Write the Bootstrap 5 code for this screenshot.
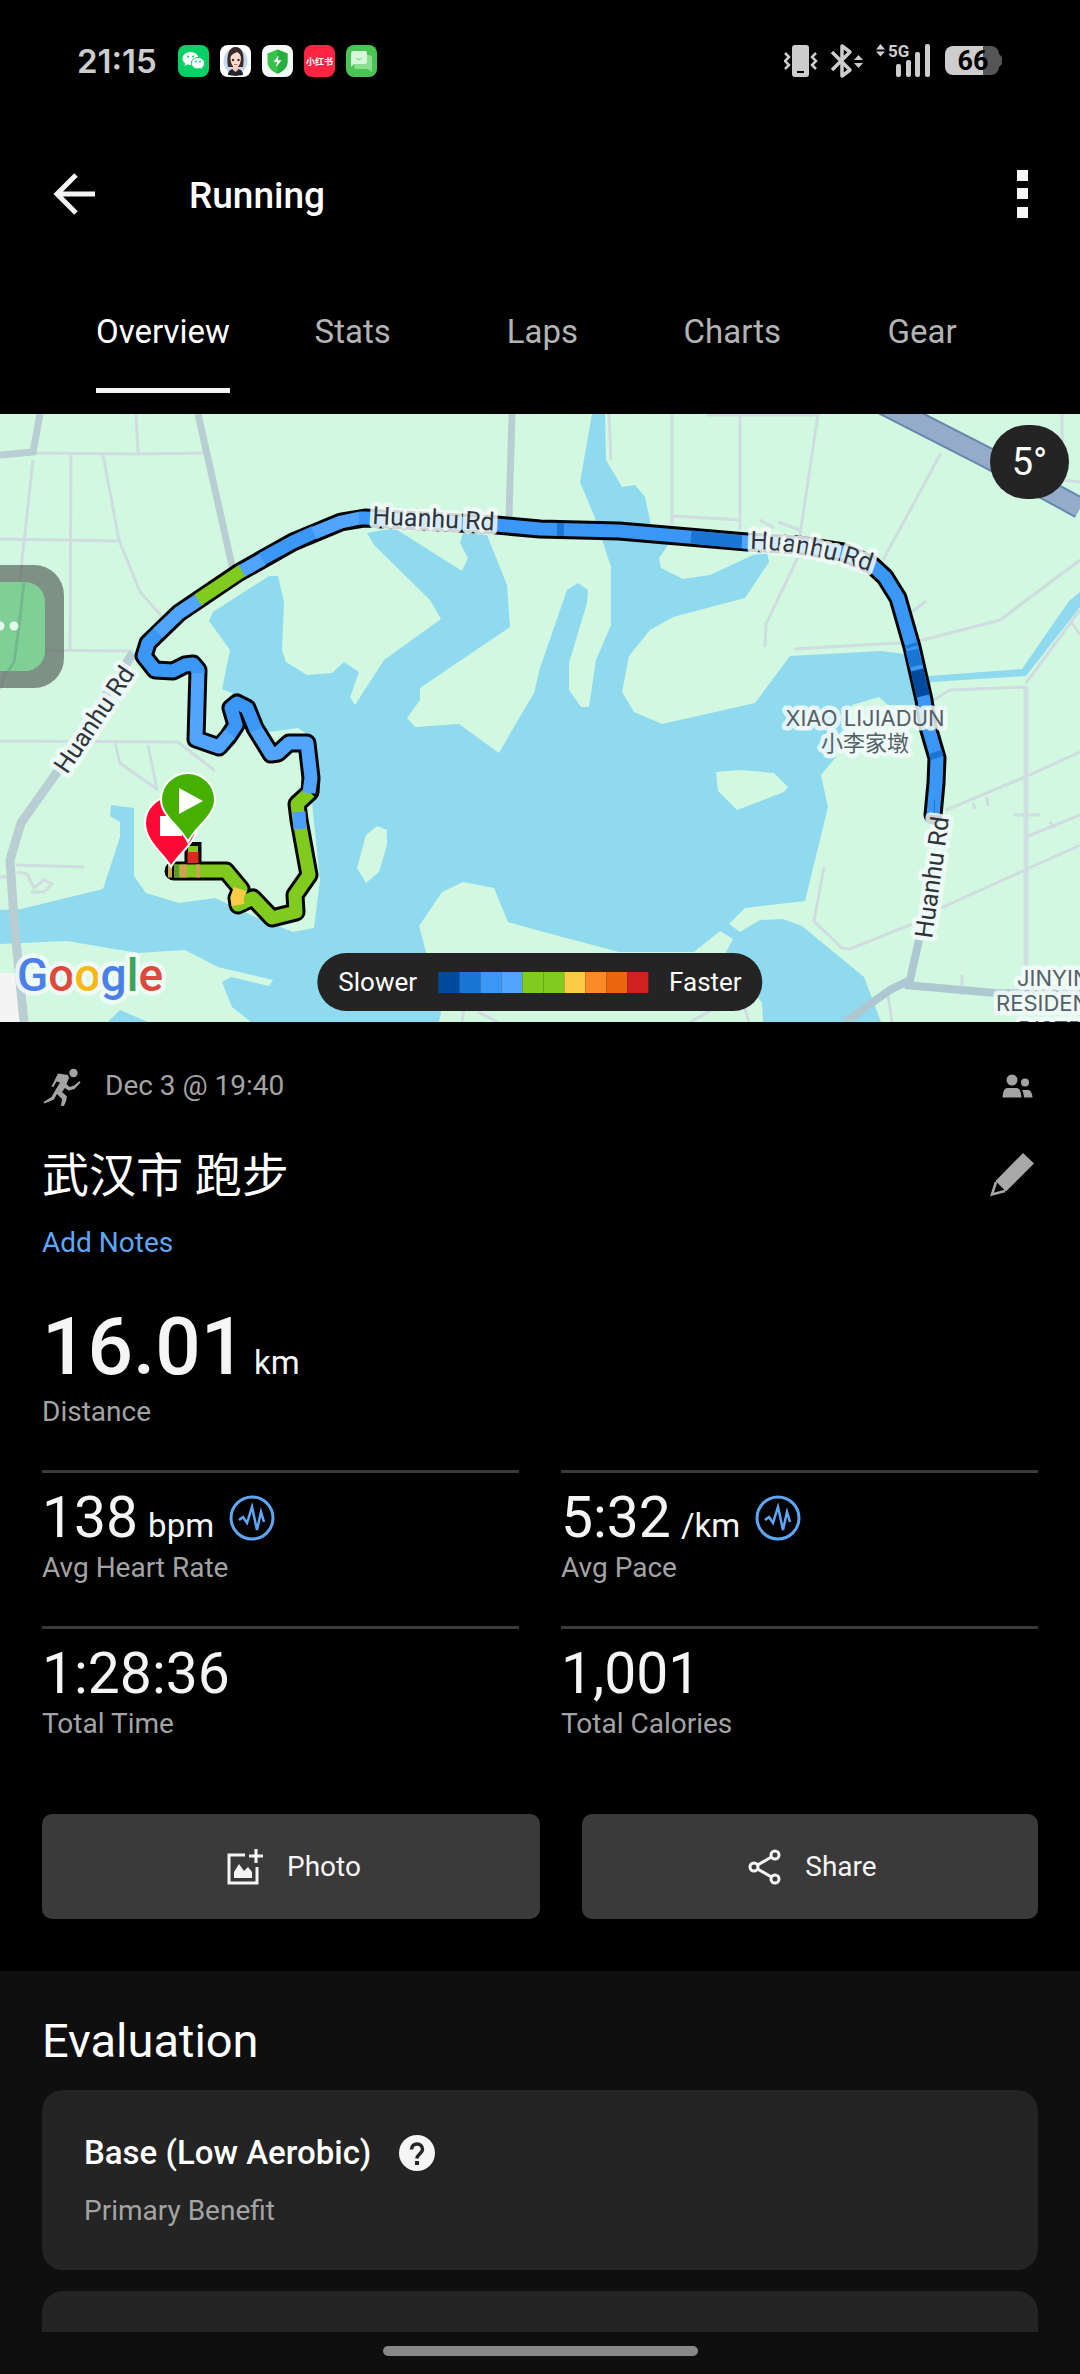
<!DOCTYPE html>
<html lang="en" data-bs-theme="dark">
<head>
<meta charset="utf-8">
<meta name="viewport" content="width=device-width, initial-scale=1">
<title>Running</title>
<link href="https://cdn.jsdelivr.net/npm/bootstrap@5.3.0/dist/css/bootstrap.min.css" rel="stylesheet">
<style>
  :root { --edge: 42px; --fg: #f5f5f5; --dim: #a3a3a3; }
  body { background: #000; color: var(--fg); font-family: Roboto, "Noto Sans CJK SC", sans-serif; font-size: 28px; line-height: 40px; }
  svg { display: block; flex: none; }
  .status-bar { height: 122px; padding: 0 77px; color: #cdcdcd; }
  .status-time { font-family: Inter, Roboto, sans-serif; font-size: 33px; font-weight: 600; margin-right: 21px; }
  .app-icons { gap: 11px; }
  .app-bar { height: 142px; padding: 2px 50px 0; }
  .app-title { font-size: 37px; line-height: 40px; font-weight: 500; margin: 3px 0 0 91px; }
  .icon-btn { background: none; border: 0; padding: 0; color: inherit; }
  .tab-row { padding: 0 63px 21px 68px; }
  .tab-row a { display: inline-block; font-size: 33px; color: #b3b3b3; text-decoration: none; padding: 48px 0 36px; border-bottom: 5px solid transparent; }
  .tab-row a.active { color: #fff; border-color: var(--fg); }
  .map-box svg.map { width: 100%; height: auto; }
  .map-pill { background: #242424; color: #fff; }
  .temp-chip { position: absolute; top: 11px; right: 11px; width: 79px; height: 74px; border-radius: 37px; font-size: 38px; }
  .pace-key { position: absolute; left: 50%; bottom: 11px; transform: translateX(-50%); height: 58px; padding: 0 21px; gap: 21px; border-radius: 29px; font-size: 26px; }
  .pace-key i { display: block; width: 21px; height: 21px; }
  .edge-x { padding-left: var(--edge); padding-right: var(--edge); }
  .dim { color: var(--dim); }
  .act-head { padding-top: 44px; }
  .act-title { font-size: 47px; line-height: 60px; font-weight: 400; margin: 0; }
  .act-date { padding-left: 21px; }
  .title-row { margin-top: 40px; }
  .notes-link { display: inline-block; margin-top: 17px; color: #5ea7f7; text-decoration: none; }
  .big-value { font-size: 80px; line-height: 90px; font-weight: 500; }
  .big-stat { margin: 39px 0 38px; }
  .unit { font-size: 33px; line-height: 40px; font-weight: 400; margin-left: 10px; }
  .big-value .unit { margin-left: 8px; }
  .stat-grid { display: grid; grid-template-columns: 1fr 1fr; column-gap: 42px; }
  .stat-cell { border-top: 3px solid #3a3a3a; padding: 15px 0 38px; }
  .stat-value { font-size: 57px; line-height: 60px; }
  .stat-value .pulse { margin: 7px 0 0 15px; }
  .actions { padding: 32px 0 52px; }
  .act-btn { height: 105px; border-radius: 10px; background: #3a3a3a; color: var(--fg); font-size: 28px; gap: 23px; padding-left: 17px; }
  .act-btn:hover { background: #444; color: #fff; }
  .eval { background: #0f0f0f; padding-top: 40px; }
  .eval h2 { font-size: 47px; line-height: 60px; font-weight: 400; margin: 0 0 19px; }
  .panel { background: #242424; border: 0; border-radius: 21px; padding: 43px 42px 39px; }
  .panel h3 { font-size: 33px; line-height: 40px; font-weight: 500; margin: 0 28px 0 0; }
  .panel p { margin: 18px 0 0; }
  .panel-next { margin-top: 21px; height: 41px; padding: 0; border-radius: 21px 21px 0 0; }
  .home-bar { background: #0f0f0f; padding: 14px 0 18px; }
  .home-bar div { width: 315px; height: 10px; border-radius: 5px; background: #888; }
  .map text { font-family: Roboto, "Noto Sans CJK SC", sans-serif; paint-order: stroke; stroke: #f3fbfa; stroke-opacity: .85; stroke-width: 9px; stroke-linejoin: round; }
  .rd-name { font-size: 25px; fill: #30343a; }
  .map .place text { font-family: Inter, "Noto Sans CJK SC", sans-serif; font-size: 22px; fill: #566067; }
  .map .brand { font-size: 46px; font-weight: 500; }
</style>
</head>
<body>
<header>
  <div class="status-bar d-flex align-items-center justify-content-between">
    <div class="d-flex align-items-center">
      <span class="status-time">21:15</span>
      <div class="app-icons d-flex">
        <svg width="31" height="32" viewBox="0 0 31 32" aria-label="WeChat"><rect width="31" height="32" rx="8" fill="#07d065"/><path d="M12.500 7C8 7 4.500 9.900 4.500 13.500c0 2 1.100 3.800 2.800 5L6.600 21l2.900-1.400c1 .3 2 .4 3 .4 4.500 0 8-2.900 8-6.500S17 7 12.500 7z" fill="#fff"/><path d="M20 12.500c3.800 0 6.600 2.600 6.600 5.700 0 1.700-.9 3.200-2.200 4.300l.5 2.200-2.500-1.200c-.8.2-1.600.4-2.400.4-3.800 0-6.600-2.600-6.600-5.700s2.800-5.700 6.600-5.700z" fill="#fff" stroke="#07d065"/><g fill="#07d065"><circle cx="10" cy="11.500" r="1"/><circle cx="15" cy="11.500" r="1"/><circle cx="18" cy="16.500" r=".9"/><circle cx="22" cy="16.500" r=".9"/></g></svg>
        <svg width="31" height="32" viewBox="0 0 31 32" aria-label="Contact"><rect width="31" height="32" rx="8" fill="#fff"/><ellipse cx="15.500" cy="16" rx="12" ry="13" fill="#c5d8ef"/><path d="M8 22C6 10 9 2 15.500 2S25 9 23 22z" fill="#3a2b2b"/><path d="M8 30c0-5 3-6 7.500-6s7.500 1 7.500 6l-7.500 1z" fill="#25242c"/><path d="M13 20h5v5l-2.500 2-2.500-2z" fill="#f3c9b8"/><path d="M10.500 14C10 9 16 8 17 7c2 1 4.500 3 3.800 8-.6 5-3 7.500-5.200 7.500s-4.700-3-5.100-8.500z" fill="#fbddd0"/><g fill="#402a2a"><circle cx="13" cy="15" r="1.200"/><circle cx="18.500" cy="15" r="1.200"/></g><path d="M14 19.500h3.500" stroke="#d86a6a"/></svg>
        <svg width="31" height="32" viewBox="0 0 31 32" aria-label="Security"><rect width="31" height="32" rx="8" fill="#f4f8f4"/><path d="M15.500 4.500l10 4v8c0 6-4.500 10-10 12.300-5.500-2.300-10-6.300-10-12.300v-8z" fill="#3ac14a"/><path d="M15.500 4.500l10 4v8c0 6-4.500 10-10 12.300z" fill="#27ae3f"/><path d="M16.500 10.500l-5 6.500h3.500l-.8 5 5.300-6.700H16z" fill="#fff"/></svg>
        <svg width="31" height="32" viewBox="0 0 31 32" aria-label="Xiaohongshu"><rect width="31" height="32" rx="8" fill="#ff2442"/><text x="15.500" y="20" text-anchor="middle" font-size="9" font-weight="700" font-family="Noto Sans CJK SC, sans-serif" fill="#fff">小红书</text></svg>
        <svg width="31" height="32" viewBox="0 0 31 32" aria-label="Messages"><rect width="31" height="32" rx="8" fill="#49c455"/><path d="M9 10h14a3 3 0 0 1 3 3v14l-4-3H11a3 3 0 0 1-3-3z" fill="#8be08f"/><path d="M7 6h12a2 2 0 0 1 2 2v9a2 2 0 0 1-2 2H8l-3 3V8a2 2 0 0 1 2-2z" fill="#d6f7d8"/><path d="M10 13c2 2 4 2 6 0" stroke="#6ed075" fill="none"/></svg>
      </div>
    </div>
    <svg width="219" height="48" viewBox="785 37 219 48" fill="#cdcdcd" aria-label="Vibrate, Bluetooth, 5G signal, battery 66 percent">
      <rect x="793" y="45" width="17" height="32" rx="3"/><rect x="798" y="71" width="7" height="2" fill="#000"/>
      <path d="M786 53l4 4-4 4 4 4-4 4M817 53l-4 4 4 4-4 4 4 4" fill="none" stroke="#cdcdcd" stroke-width="2.500"/>
      <path d="M833 52l18 18-8 6V46l8 6-18 18" fill="none" stroke="#cdcdcd" stroke-width="3.500" stroke-linejoin="round"/>
      <path d="M855 60l4.500-5 4.500 5zM855 63l4.500 5 4.500-5z"/>
      <path d="M877 49.500l4.500-5.500 4.500 5.500zM877 51.500l4.500 5 4.500-5z"/>
      <text x="889" y="57" font-family="Roboto, sans-serif" font-weight="700" font-size="17">5G</text>
      <rect x="897" y="64" width="5" height="13" rx="2"/><rect x="907" y="60" width="5" height="17" rx="2"/><rect x="916" y="52" width="5" height="25" rx="2"/><rect x="926" y="44" width="5" height="33" rx="2"/>
      <path d="M984 46h8a8 8 0 0 1 8 8l3 3v7l-3 3a8 8 0 0 1-8 8h-8z" fill="#555"/>
      <path d="M984 46h-30a8 8 0 0 0-8 8v13a8 8 0 0 0 8 8h30z"/>
      <text x="974" y="70" text-anchor="middle" font-family="Roboto, sans-serif" font-weight="700" font-size="27" fill="#000">66</text>
    </svg>
  </div>
  <div class="app-bar d-flex align-items-center">
    <button class="icon-btn" type="button" aria-label="Back"><svg width="48" height="48" viewBox="0 0 48 48" fill="none" stroke="#f5f5f5" stroke-width="5"><path d="M45 24H7M26 5L7 24l19 19"/></svg></button>
    <h1 class="app-title">Running</h1>
    <button class="icon-btn ms-auto" type="button" aria-label="More"><svg width="15" height="48" viewBox="0 0 15 48" fill="#f5f5f5"><path d="M2 0h11v11H2zM2 18h11v11H2zM2 37h11v11H2z"/></svg></button>
  </div>
  <nav class="tab-row d-flex text-center">
    <div class="col"><a class="active" href="#" aria-current="page">Overview</a></div>
    <div class="col"><a href="#">Stats</a></div>
    <div class="col"><a href="#">Laps</a></div>
    <div class="col"><a href="#">Charts</a></div>
    <div class="col"><a href="#">Gear</a></div>
  </nav>
</header>

<main>
  <section class="map-box position-relative" aria-label="Route map">
    <svg class="map" viewBox="0 414 1080 608">
      <rect y="414" width="1080" height="608" fill="#d2f8e1"/>
      <!-- lake -->
      <path fill="#8fdaee" d="M269 576L278 576 284 602 282 650 286 662 307 675 332 673 344 662 359 672 350 697 355 705 384 660 441 619 430 600 374 545 367 533 394 528 462 571 468 558 460 543 463 533 487 535 507 585 510 627 420 688 420 700 407 718 415 727 459 724 499 753 518 720 534 693 540 668 567 590 578 583 588 590 587 603 569 663 569 690 581 707 589 707 596 660 611 625 611 567 595 518 580 482 592 414 605 414 606 460 622 487 635 485 645 497 651 525 668 545 659 558 661 568 683 579 710 575 753 555 767 553 769 562 745 598 673 617 650 630 629 656 622 692 634 712 662 724 755 703 790 656 881 651 905 654 929 676 1022 669 1069 601 1080 592 1080 607 1026 676 931 682 925 705 888 705 879 697 852 705 836 757 821 775 828 807 805 901 745 908 729 924 740 932 760 920 783 919 802 926 864 977 881 1022 763 1022 762 1003 726 952 733 939 720 931 694 952 619 952 540 931 508 922 494 888 463 882 442 892 419 926 426 952 441 1013 439 1022 251 1022 232 1007 222 982 231 977 269 986 273 980 218 967 185 950 138 953 67 941 0 944 0 910 21 909 103 889 120 837 120 822 110 816 111 805 134 808 134 876 146 893 179 903 215 898 255 917 293 932 314 928 320 880 312 803 315 740 298 728 270 732 262 727 255 703 222 689 230 650 209 621 213 612z"/>
      <path fill="#8fdaee" d="M108 1022l12-12 28 12z"/>
      <path fill="#d2f8e1" d="M377 826l10 4v15l-8 27-13 11-9-15 9-33zM716 772l24-2 34 3 14 14-4 5-47 18-19-19z"/>
      <path fill="#f5f4f4" d="M0 973h27v49H0z"/>
      <!-- local roads -->
      <g fill="none" stroke="#cfdce0" stroke-width="3">
        <path d="M35 453l102 1 68-1M136 414l2 39M71 453l-1 197M103 455l16 85 21 52 25 28M33 460L22 560 13 650 0 690M0 539l119 2M0 650l133 1M0 741l178 1 37 29M115 743l5 20 38 27M148 745l9 45M16 865l68 2M17 872l10 2 7 14 10-8 8 4-8 8H31M0 877h12"/>
        <path d="M609 414l2 46M672 414v111M740 414v116M818 414l-18 121M672 516l68 4M707 415h111M941 453l-58 107M798 557l-32 67-1 23M794 649l121-7 85-22 80-60M1026 683l54-73M1070 620l10 15M912 612l14-11M934 700l16-10 76-3M760 520l14 8M778 522l22 8M1062 414v66l18 2"/>
        <path d="M946 810l79-33 55-25M941 908l84-38 55-25M1026 837l54-22M824 867l-10 54 28 27 8 1 65-26M1014 815h26M1050 822l5 6M987 797l1 9M973 803l2 6M962 975v20M690 1022l40-22M745 1008l4 14M888 995l4 27M464 1008l-2 14M478 1012l20 10"/>
      </g>
      <path d="M1026 687V967" fill="none" stroke="#cfe0e1" stroke-width="5"/>
      <!-- main roads -->
      <g fill="none" stroke="#b9ced2" stroke-width="7">
        <path d="M40 414l-7 38-33 3M198 414l35 156M512 414l-3 103"/>
        <path d="M133 653L55 775 21 823 10 860l4 60 10 102" stroke-width="9"/>
        <path d="M919 940l-9 40-20 10-45 32M905 985l90 8 85 1" stroke="#aec8d1" stroke-width="8"/>
      </g>
      <path d="M865 395l125 64 90 49" fill="none" stroke="#6488ae" stroke-width="22"/>
      <path d="M865 395l125 64 90 49" fill="none" stroke="#94abca" stroke-width="18"/>
      <!-- recorded track -->
      <g fill="none" stroke-linejoin="round">
        <path stroke="#050505" stroke-width="19" stroke-linecap="round" d="M174 871L226 871 241 889 237 898 238 905 253 898 272 918 296 912 295 895 309 875 299 820 297 804 310 792 311 778 307 743 289 743 278 753 271 754 255 728 247 708 237 703 231 708 236 725 228 737 219 747 196 739 198 670 193 664 185 665 173 671 155 670 144 656 148 643 179 613 238 573 293 542 341 522 365 518 496 525 540 529 619 531 747 542 798 545 843 552 872 565 885 577 898 598 912 647 924 700 928 727 937 758 936 783 933 815"/>
        <path stroke="#050505" stroke-width="17" d="M193 868V842"/>
        <g stroke-width="13">
          <path stroke="#80cb1e" d="M174 871L226 871 241 889 237 898 238 905 253 898 272 918 296 912 295 895 309 875 299 820 297 804 310 792"/>
          <path stroke="#52a5fe" d="M309 793L311 778 307 743 289 743 278 753 271 754 255 728"/>
          <path stroke="#3b97f5" d="M256 730L247 708 237 703 231 708 236 725 228 737"/>
          <path stroke="#52a5fe" d="M230 734L219 747 196 739 198 670"/>
          <path stroke="#3b97f5" d="M198 673L198 670 193 664 185 665 173 671 155 670 144 656 148 643 160 631"/>
          <path stroke="#52a5fe" d="M158 633L179 613 200 599"/>
          <path stroke="#80cb1e" d="M198 600L243 570"/>
          <path stroke="#52a5fe" d="M242 571l21-12"/>
          <path stroke="#3b97f5" d="M262 559L293 542 315 532"/>
          <path stroke="#52a5fe" d="M314 533L341 522 360 518"/>
          <path stroke="#3b97f5" d="M359 518l6 0L496 525 540 529 619 531 747 542 798 545 843 552 872 565 885 577 898 598 912 647 924 700 928 727 937 758 936 783 933 815"/>
          <path stroke="#80cb1e" stroke-width="10" d="M193 846v7"/>
          <path stroke="#dc2a20" stroke-width="11" d="M193 852v11"/>
          <path stroke="#cda253" d="M168 871h4M180 871h7M196 871h4"/>
          <path stroke="#5c9c2b" d="M174 871h5"/>
          <path stroke="#fccb46" d="M240 889l-3 9 1 7"/>
          <path stroke="#4c9ffc" d="M299 812l1 17"/>
          <path stroke="#1a76d4" d="M557 529.500h7M691 537l51 5M911 644l1 3M912 650l4 16M935 752l2 6M934 806h1"/>
          <path stroke="#52a5fe" d="M742 542l20 1"/>
          <path stroke="#004b9f" d="M917 670l6 26"/>
        </g>
      </g>
      <!-- names -->
      <g class="rd-name">
        <text transform="translate(372 524) rotate(3)">Huanhu Rd</text>
        <path id="bend" d="M750 549Q815 550 885 577" fill="none"/>
        <text><textPath href="#bend">Huanhu Rd</textPath></text>
        <text transform="translate(67 775) rotate(-56)">Huanhu Rd</text>
        <text transform="translate(932 939) rotate(-82)">Huanhu Rd</text>
      </g>
      <g class="place">
        <text x="865" y="726" text-anchor="middle">XIAO LIJIADUN</text>
        <text x="865" y="751" text-anchor="middle">小李家墩</text>
        <text x="1017" y="986">JINYIN</text><text x="996" y="1011">RESIDENCE</text><text x="1018" y="1037">DISTRICT</text>
      </g>
      <!-- finish and start pins -->
      <path d="M171 867c-6-12-26-25-26-44a26 26 0 0 1 53 0c0 19-21 32-27 44z" fill="#ff0a35" stroke="#fff" stroke-width="2"/><path d="M160 816h22v20h-22z" fill="#fff"/>
      <path d="M188 842c-7-15-27-26-27-42a27 27 0 0 1 54 0c0 16-20 27-27 42z" fill="#45b000" stroke="#fff" stroke-width="2"/><path d="M179 788l24 13-24 13z" fill="#fff"/>
      <!-- floating bubble on the left edge -->
      <rect x="-60" y="565" width="124" height="123" rx="30" fill="#556058" fill-opacity=".68"/>
      <rect x="-60" y="582" width="105" height="89" rx="20" fill="#80cf96"/>
      <path d="M24 582q-4 40-10 80l-6 9" fill="none" stroke="#72b98d" stroke-width="3"/>
      <circle cx="0" cy="626" r="4.500" fill="#e4fbea"/><circle cx="14" cy="626" r="4.500" fill="#e4fbea"/>
      <text class="brand" x="17" y="991"><tspan fill="#4a80e8">G</tspan><tspan fill="#dc4a3e">o</tspan><tspan fill="#f5b90f">o</tspan><tspan fill="#4a80e8">g</tspan><tspan fill="#3fa35a">l</tspan><tspan fill="#dc4a3e">e</tspan></text>
    </svg>
    <div class="map-pill temp-chip d-flex align-items-center justify-content-center">5°</div>
    <div class="map-pill pace-key d-flex align-items-center">
      <span>Slower</span>
      <div class="d-flex"><i style="background:#004b9f"></i><i style="background:#1a76d4"></i><i style="background:#3b97f5"></i><i style="background:#52a5fe"></i><i style="background:#80cb1e"></i><i style="background:#80cb1e"></i><i style="background:#fccb46"></i><i style="background:#fa8b27"></i><i style="background:#eb660f"></i><i style="background:#d12022"></i></div>
      <span>Faster</span>
    </div>
  </section>

  <section>
    <div class="act-head edge-x">
      <div class="d-flex align-items-center dim">
        <svg width="42" height="40" viewBox="0 0 42 40" fill="#a3a3a3"><circle cx="31.500" cy="7" r="4.200"/><path d="M16 7.500l10 1.500 1 3-2.500 6 3 3 4.500-1.500 5.500-4.500 1 1.500-6 6.500-6 1.500-3.500-2.500-3 4 5 4.500-1 5-3.500 7.500h-2l1.500-10-5-5-3 5.500-9.500 4-1-1.500 8-5 4.500-8 4-6.500-3.500-1-3 5.500-2-.5z"/></svg>
        <span class="act-date flex-fill">Dec 3 @ 19:40</span>
        <svg width="42" height="40" viewBox="0 0 42 40" fill="#a3a3a3"><circle cx="16" cy="14" r="5.500"/><circle cx="29" cy="16.500" r="4"/><path d="M6.500 31.500c.5-6.500 2-9.500 5-9.500h9c3 0 4.500 3 5 9.500zM26 24h6c2.500 0 4 2.500 4.500 7.500h-8.500c-.2-3-.8-5.500-2-7.500z"/></svg>
      </div>
      <div class="title-row d-flex align-items-center justify-content-between">
        <h2 class="act-title">武汉市 跑步</h2>
        <button class="icon-btn" type="button" aria-label="Edit"><svg width="48" height="48" viewBox="0 0 48 48"><path d="M33 1l11 10.500-28 28L5.500 29z" fill="#a8a8a8"/><path d="M6 30L2 42.500 15 39" fill="none" stroke="#a8a8a8" stroke-width="2.500"/></svg></button>
      </div>
      <a class="notes-link" href="#">Add Notes</a>
      <div class="big-stat">
        <div class="big-value">16.01<span class="unit">km</span></div>
        <div class="dim">Distance</div>
      </div>
      <div class="stat-grid">
        <div class="stat-cell">
          <div class="stat-value d-flex"><span>138<span class="unit">bpm</span></span><svg class="pulse" width="46" height="46" viewBox="0 0 46 46" fill="none" stroke="#5ea7f7" stroke-width="3"><circle cx="23" cy="23" r="21"/><path d="M10 25l4-3 4 6 5-16 5 23 4-18 3 10" stroke-width="2.500"/></svg></div>
          <div class="dim">Avg Heart Rate</div>
        </div>
        <div class="stat-cell">
          <div class="stat-value d-flex"><span>5:32<span class="unit">/km</span></span><svg class="pulse" width="46" height="46" viewBox="0 0 46 46" fill="none" stroke="#5ea7f7" stroke-width="3"><circle cx="23" cy="23" r="21"/><path d="M10 25l4-3 4 6 5-16 5 23 4-18 3 10" stroke-width="2.500"/></svg></div>
          <div class="dim">Avg Pace</div>
        </div>
        <div class="stat-cell">
          <div class="stat-value">1:28:36</div>
          <div class="dim">Total Time</div>
        </div>
        <div class="stat-cell">
          <div class="stat-value">1,001</div>
          <div class="dim">Total Calories</div>
        </div>
      </div>
    </div>
    <div class="actions row g-0">
      <div class="col-6 edge-x pe-0">
        <button type="button" class="btn act-btn w-100 d-flex align-items-center justify-content-center"><svg width="38" height="38" viewBox="0 0 38 38" fill="none" stroke="#f5f5f5" stroke-width="3"><path d="M19 7H3v28h28V19M30 1v14M23 8h14"/><path d="M8 30V24l5-8 5 7 4-4 4 5v6z" fill="#f5f5f5" stroke="none"/></svg>Photo</button>
      </div>
      <div class="col-6 edge-x">
        <button type="button" class="btn act-btn w-100 d-flex align-items-center justify-content-center"><svg width="34" height="38" viewBox="0 0 34 38" fill="none" stroke="#f5f5f5" stroke-width="3"><circle cx="6" cy="19" r="4"/><circle cx="27" cy="7" r="4"/><circle cx="27" cy="31" r="4"/><path d="M9.500 17l14-8M9.500 21l14 8"/></svg>Share</button>
      </div>
    </div>
  </section>

  <section class="eval edge-x">
    <h2>Evaluation</h2>
    <div class="card panel">
      <div class="d-flex align-items-center">
        <h3>Base (Low Aerobic)</h3>
        <button class="icon-btn" type="button" aria-label="Help"><svg width="36" height="36" viewBox="0 0 36 36"><circle cx="18" cy="18" r="18" fill="#f5f5f5"/><path d="M12.500 14.500c0-7.500 11-7.500 11 0 0 4-5.500 4.500-5.500 9" fill="none" stroke="#242424" stroke-width="3.500"/><path d="M16 26h4v4h-4z" fill="#242424"/></svg></button>
      </div>
      <p class="dim">Primary Benefit</p>
    </div>
    <div class="card panel panel-next"></div>
  </section>
</main>
<footer class="home-bar d-flex justify-content-center"><div></div></footer>
<script src="https://cdn.jsdelivr.net/npm/bootstrap@5.3.0/dist/js/bootstrap.bundle.min.js"></script>
</body>
</html>
